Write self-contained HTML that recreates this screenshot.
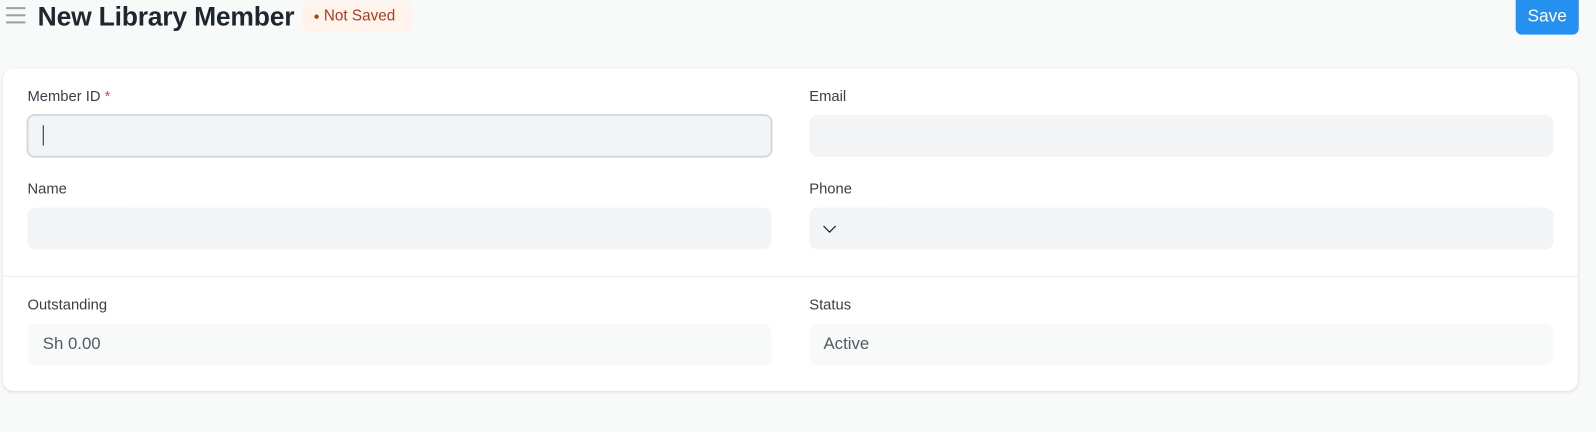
<!DOCTYPE html>
<html><head><style>
body{margin:0;width:1596px;height:431px;background:#f8f9f9;font-family:"Liberation Sans",sans-serif;position:relative;overflow:hidden;color:#1f272e}
#w{position:absolute;left:0;top:0;width:1568px;height:424px;transform:scale(1.0179);transform-origin:0 0}
.a{position:absolute}
.ham{left:6px;width:19px;height:2px;background:#9aa1ab}
.title{left:37px;top:1px;font-size:26px;font-weight:bold;color:#1f272e;letter-spacing:-0.2px}
.badge{left:297px;top:1px;width:108px;height:30px;background:#fff3ec;border-radius:6px;color:#a3411c;font-size:15px;line-height:30px}
.save{left:1489px;top:0;width:62px;height:34px;background:#2490ef;border-radius:0 0 6px 6px;color:#fff;font-size:17px;text-align:center;line-height:32px}
.card{left:3px;top:67px;width:1547px;height:317px;background:#fff;border-radius:10px;box-shadow:0 1px 3px rgba(0,0,0,.12)}
.lbl{font-size:14.5px;color:#383f47}
.in{background:#f3f4f6;border-radius:8px;height:41px;width:731px}
.ro{background:#f8f9f9;border-radius:8px;height:41px;width:731px;font-size:16.5px;color:#525a63;line-height:40px;text-indent:15px}
</style></head><body><div id="w">
<div class="a ham" style="top:7px"></div>
<div class="a ham" style="top:14px"></div>
<div class="a ham" style="top:21px"></div>
<div class="a title">New Library Member</div>
<div class="a badge"><span style="margin-left:11px;font-size:10px;vertical-align:1px">●</span> Not Saved</div>
<div class="a save">Save</div>
<div class="a card"></div>
<div class="a lbl" style="left:27px;top:87px">Member ID <span style="color:#e24c4c">*</span></div>
<div class="a in" style="left:26px;top:112px;width:729px;height:39px;border:2px solid #d7dadd"></div>
<div class="a" style="left:42px;top:123px;width:1px;height:20px;background:#1f272e"></div>
<div class="a lbl" style="left:795px;top:87px">Email</div>
<div class="a in" style="left:795px;top:113px"></div>
<div class="a lbl" style="left:27px;top:178px">Name</div>
<div class="a in" style="left:27px;top:204px"></div>
<div class="a lbl" style="left:795px;top:178px">Phone</div>
<div class="a in" style="left:795px;top:204px"></div>
<svg class="a" style="left:807px;top:219px" width="16" height="12"><path d="M2 3 L8 9 L14 3" stroke="#1f272e" stroke-width="1.2" fill="none"/></svg>
<div class="a" style="left:3px;top:271px;width:1547px;height:1px;background:#ebeef0"></div>
<div class="a lbl" style="left:27px;top:292px">Outstanding</div>
<div class="a ro" style="left:27px;top:318px">Sh 0.00</div>
<div class="a lbl" style="left:795px;top:292px">Status</div>
<div class="a ro" style="left:795px;top:318px;text-indent:14px">Active</div>
</div></body></html>
